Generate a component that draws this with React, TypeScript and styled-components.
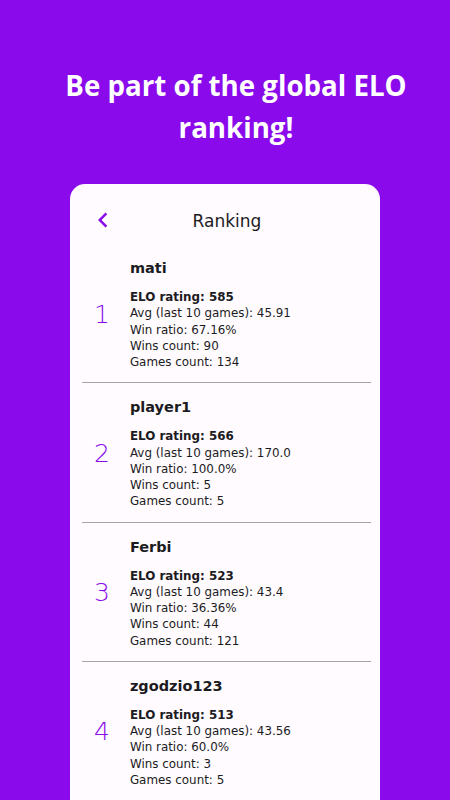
import React from "react";
import styled, { createGlobalStyle } from "styled-components";

const Global = createGlobalStyle`
  html, body { margin: 0; padding: 0; }
  body { background: #8a0aec; overflow: hidden; }
`;

const Page = styled.div`
  width: 450px;
  height: 800px;
  background: #8a0aec;
  display: flex;
  flex-direction: column;
  align-items: center;
  box-sizing: border-box;
  padding-top: 64px;
  overflow: hidden;
`;

const Title = styled.h1`
  margin: 0 0 36px 22px;
  width: 380px;
  text-align: center;
  color: #ffffff;
  font-family: "Open Sans", sans-serif;
  font-weight: 700;
  font-size: 27.7px;
  line-height: 42px;
`;

const Card = styled.div`
  width: 310px;
  flex: 1;
  background: #fffbfe;
  border-radius: 15px 15px 0 0;
  display: flex;
  flex-direction: column;
  padding: 0 9px 0 12px;
  box-sizing: border-box;
`;

const Header = styled.div`
  height: 60px;
  display: flex;
  align-items: center;
  position: relative;
  justify-content: center;
`;

const Back = styled.div`
  position: absolute;
  left: 6px;
  top: 21px;
  width: 30px;
  height: 30px;
  display: flex;
`;

const HeaderTitle = styled.div`
  font-family: "DejaVu Sans", sans-serif;
  font-size: 17px;
  color: #1c1b1f;
  margin-left: 1px;
  margin-top: 14px;
`;

const Row = styled.div<{ $last?: boolean }>`
  display: flex;
  align-items: center;
  padding: 14px 0 12px 0;
  border-bottom: ${(p) => (p.$last ? "none" : "1px solid #a7a2ab")};
`;

const Rank = styled.div`
  font-family: "DejaVu Sans", sans-serif;
  font-weight: 200;
  font-size: 25px;
  color: #8a0aec;
  padding-left: 12px;
  margin-right: 20px;
`;

const Info = styled.div`
  display: flex;
  flex-direction: column;
  font-family: "DejaVu Sans", sans-serif;
  color: #1c1b1f;
`;

const Name = styled.div`
  font-size: 14.5px;
  font-weight: 600;
  line-height: 20px;
  margin-bottom: 11px;
`;

const Line = styled.div<{ $bold?: boolean }>`
  font-size: 11.9px;
  line-height: 16.25px;
  font-weight: ${(p) => (p.$bold ? 700 : 400)};
`;

const players = [
  { rank: 1, name: "mati", elo: 585, avg: "45.91", ratio: "67.16%", wins: 90, games: 134 },
  { rank: 2, name: "player1", elo: 566, avg: "170.0", ratio: "100.0%", wins: 5, games: 5 },
  { rank: 3, name: "Ferbi", elo: 523, avg: "43.4", ratio: "36.36%", wins: 44, games: 121 },
  { rank: 4, name: "zgodzio123", elo: 513, avg: "43.56", ratio: "60.0%", wins: 3, games: 5 },
];

export default function App() {
  return (
    <Page>
      <Global />
      <Title>Be part of the global ELO ranking!</Title>
      <Card>
        <Header>
          <Back>
            <svg width="30" height="30" viewBox="0 0 24 24">
              <path d="M15.4 7.4 14 6l-6 6 6 6 1.4-1.4L10.8 12z" fill="#8a0aec" />
            </svg>
          </Back>
          <HeaderTitle>Ranking</HeaderTitle>
        </Header>
        {players.map((p, i) => (
          <Row key={p.rank} $last={i === players.length - 1}>
            <Rank>{p.rank}</Rank>
            <Info>
              <Name>{p.name}</Name>
              <Line $bold>ELO rating: {p.elo}</Line>
              <Line>Avg (last 10 games): {p.avg}</Line>
              <Line>Win ratio: {p.ratio}</Line>
              <Line>Wins count: {p.wins}</Line>
              <Line>Games count: {p.games}</Line>
            </Info>
          </Row>
        ))}
      </Card>
    </Page>
  );
}
